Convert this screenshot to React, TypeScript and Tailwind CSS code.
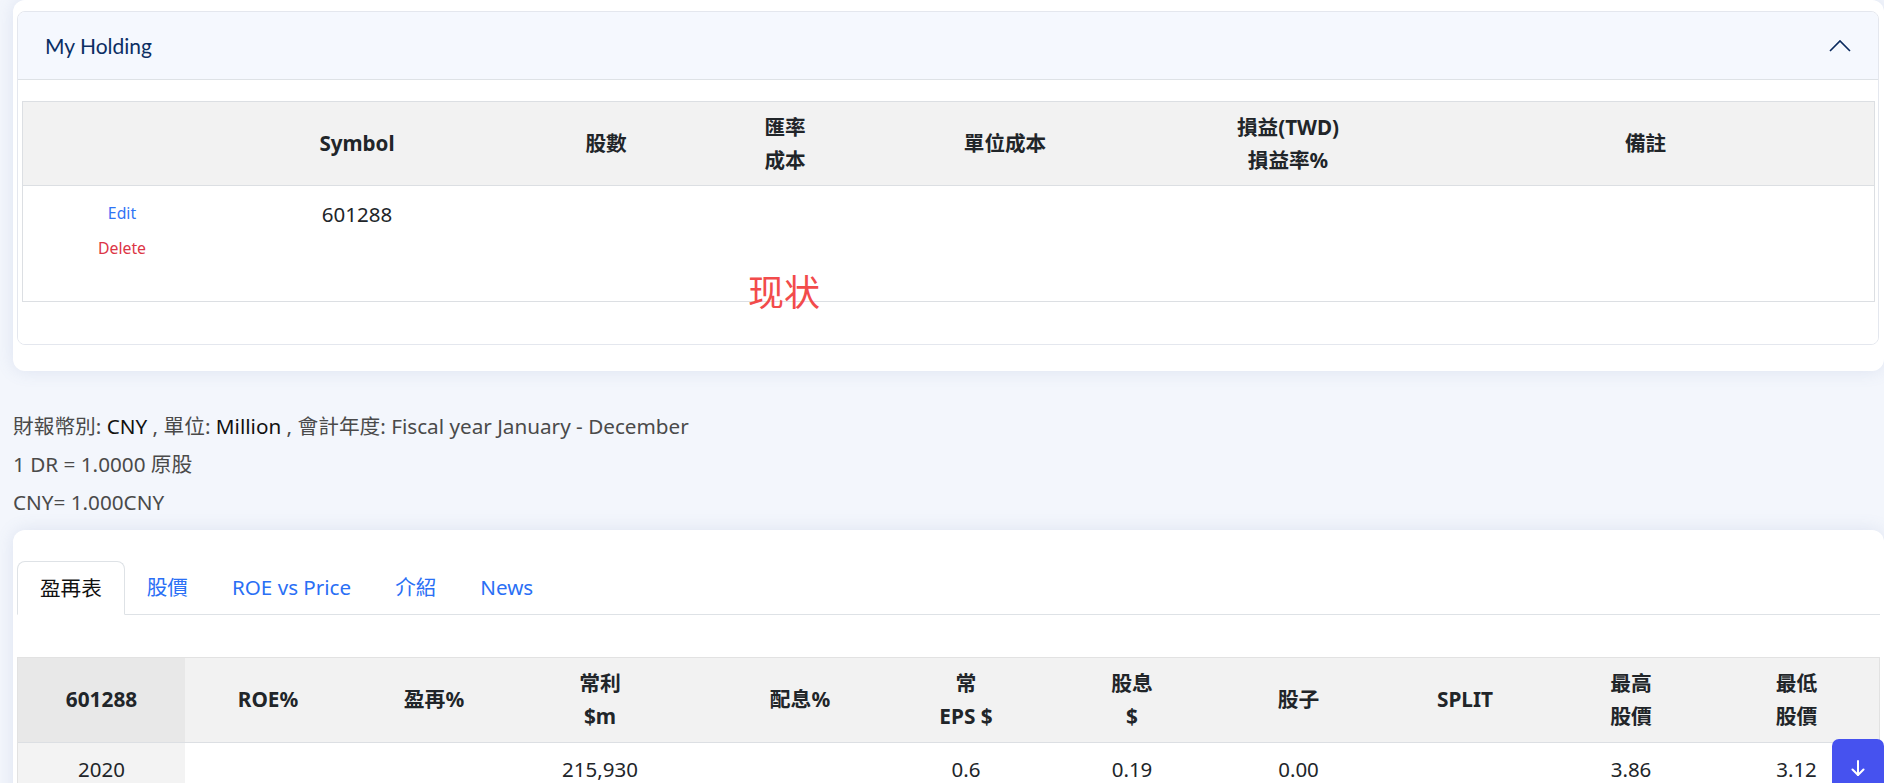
import React from "react";

const FONT = "font-['Noto_Sans','Noto_Sans_CJK_TC',sans-serif]";

function ChevronUp() {
  return (
    <svg width="22" height="13" viewBox="0 0 22 13" fill="none">
      <polyline points="1,12 11,2 21,12" stroke="#0a2a5e" strokeWidth="1.6" fill="none" />
    </svg>
  );
}

function ArrowDown() {
  return (
    <svg width="14" height="16" viewBox="0 0 14 16" fill="none">
      <line x1="7" y1="1" x2="7" y2="15" stroke="white" strokeWidth="2" strokeLinecap="round" />
      <polyline points="1.5,9.5 7,15 12.5,9.5" stroke="white" strokeWidth="2" fill="none" strokeLinecap="round" strokeLinejoin="round" />
    </svg>
  );
}

function TwoLine({ a, b }: { a: string; b: string }) {
  return (
    <div className="flex flex-col items-center leading-[33px]">
      <span>{a}</span>
      <span>{b}</span>
    </div>
  );
}

export default function App() {
  const holdHead = "flex items-center justify-center text-[20.6px] font-bold text-[#212529]";
  const h2 = "flex items-center justify-center text-[20.8px] font-bold text-[#212529]";
  const c2 = "flex items-start justify-center pt-[11px] text-[20.5px] leading-[30px] text-[#212529]";
  return (
    <div className={`relative min-h-[783px] w-[1884px] overflow-hidden bg-[#f3f6fc] pl-[13px] ${FONT}`}>
      {/* Card 1 */}
      <div className="rounded-[12px] bg-white pb-[26px] pl-[4px] pr-[5px] pt-[11px] shadow-[0_0_18px_rgba(90,110,170,0.14)]">
        <div className="overflow-hidden rounded-[8px] border border-[#e4e7ee]">
          <div className="flex h-[68px] items-center justify-between border-b border-[#dee2e6] bg-[#f5f8fe] pl-[27px] pr-[27px]">
            <span className="font-['Lato','Noto_Sans',sans-serif] text-[21px] text-[#0b2e63]">My Holding</span>
            <ChevronUp />
          </div>
          <div className="bg-white pb-[42px] pl-[4px] pr-[3px] pt-[21px]">
            <div className="border border-[#dcdfe3]">
              <div className="grid h-[84px] grid-cols-[198px_272px_226px_132px_308px_258px_1fr] border-b border-[#dcdfe3] bg-[#f2f2f2]">
                <div />
                <div className={holdHead}>Symbol</div>
                <div className={holdHead}>股數</div>
                <div className={holdHead}><TwoLine a="匯率" b="成本" /></div>
                <div className={holdHead}>單位成本</div>
                <div className={holdHead}><TwoLine a="損益(TWD)" b="損益率%" /></div>
                <div className={holdHead}>備註</div>
              </div>
              <div className="grid h-[115px] grid-cols-[198px_272px_226px_132px_308px_258px_1fr] bg-white">
                <div className="flex flex-col items-center pt-[10px]">
                  <span className="flex h-[35px] items-center text-[15.8px] text-[#2f74f5]">Edit</span>
                  <span className="flex h-[35px] items-center text-[15.8px] text-[#dc3545]">Delete</span>
                </div>
                <div className="flex items-start justify-center pt-[12px] text-[20.5px] leading-[32px] text-[#212529]">601288</div>
                <div />
                <div />
                <div />
                <div />
                <div />
              </div>
            </div>
          </div>
        </div>
      </div>

      {/* Info lines */}
      <div className="mt-[37px] text-[20.7px] text-[#4a4a4a]">
        <div className="flex h-[38px] items-center whitespace-pre">
          財報幣別: <span className="text-[#111]">CNY</span> , 單位: <span className="text-[#111]">Million</span> , 會計年度: Fiscal year January - December
        </div>
        <div className="flex h-[38px] items-center">1 DR = 1.0000 原股</div>
        <div className="flex h-[38px] items-center">CNY= 1.000CNY</div>
      </div>

      {/* Card 2 */}
      <div className="mt-[8px] h-[300px] rounded-[12px] bg-white pl-[4px] pr-[4px] pt-[31px] shadow-[0_0_18px_rgba(90,110,170,0.14)]">
        <div className="flex border-b border-[#dee2e6] text-[20.6px]">
          <div className="-mb-px flex h-[54px] items-center rounded-t-[8px] border border-[#dee2e6] border-b-white bg-white px-[22px] text-[#111]">盈再表</div>
          <div className="flex h-[53px] items-center px-[22px] text-[#2a6ff5]">股價</div>
          <div className="flex h-[53px] items-center px-[22px] text-[#2a6ff5]">ROE vs Price</div>
          <div className="flex h-[53px] items-center px-[22px] text-[#2a6ff5]">介紹</div>
          <div className="flex h-[53px] items-center px-[22px] text-[#2a6ff5]">News</div>
        </div>
        <div className="mt-[42px] border border-[#e2e2e2]">
          <div className="grid h-[85px] grid-cols-[167px_166px_166px_166px_200px_166px_166px_167px_166px_166px_1fr] border-b border-[#dcdfe3] bg-[#f2f2f2]">
            <div className={`${h2} bg-[#e8e8e8]`}>601288</div>
            <div className={h2}>ROE%</div>
            <div className={h2}>盈再%</div>
            <div className={h2}><TwoLine a="常利" b="$m" /></div>
            <div className={`${h2} pl-[34px]`}>配息%</div>
            <div className={h2}><TwoLine a="常" b="EPS $" /></div>
            <div className={h2}><TwoLine a="股息" b="$" /></div>
            <div className={h2}>股子</div>
            <div className={h2}>SPLIT</div>
            <div className={h2}><TwoLine a="最高" b="股價" /></div>
            <div className={h2}><TwoLine a="最低" b="股價" /></div>
          </div>
          <div className="grid h-[60px] grid-cols-[167px_166px_166px_166px_200px_166px_166px_167px_166px_166px_1fr] bg-white">
            <div className={`${c2} bg-[#f3f3f3]`}>2020</div>
            <div className={c2}></div>
            <div className={c2}></div>
            <div className={c2}>215,930</div>
            <div className={c2}></div>
            <div className={c2}>0.6</div>
            <div className={c2}>0.19</div>
            <div className={c2}>0.00</div>
            <div className={c2}></div>
            <div className={c2}>3.86</div>
            <div className={c2}>3.12</div>
          </div>
        </div>
      </div>

      {/* Annotation */}
      <div className="absolute left-[748px] top-[272px] font-['Noto_Sans_CJK_SC',sans-serif] text-[36px] leading-none text-[#f24b4b]">现状</div>

      {/* Scroll button */}
      <div className="absolute left-[1832px] top-[739px] flex h-[58px] w-[52px] items-start justify-center rounded-[7px] bg-[#4652ef] pt-[21px]">
        <ArrowDown />
      </div>
    </div>
  );
}
